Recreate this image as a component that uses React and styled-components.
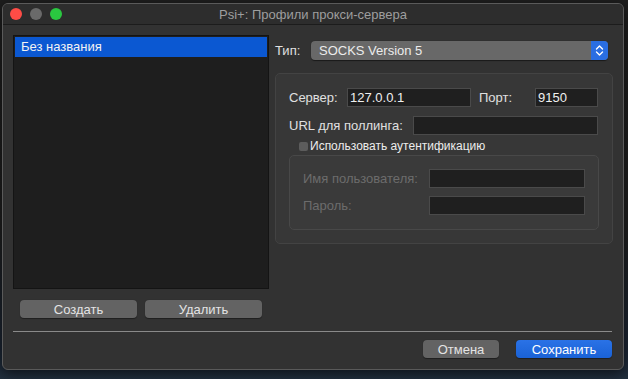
import styled, { createGlobalStyle } from "styled-components";

const GlobalStyle = createGlobalStyle`
  html, body {
    margin: 0;
    padding: 0;
  }
  body {
    width: 628px;
    height: 379px;
    overflow: hidden;
    background: linear-gradient(180deg, #1e1e1e 0%, #1f1f1f 60%, #1b2533 92%, #22303f 100%);
    font-family: "Liberation Sans", Arial, sans-serif;
    font-size: 13px;
    color: #dcdcdc;
  }
`;

const Window = styled.div`
  margin: 3px 0 0 2px;
  width: 620px;
  height: 365px;
  background: #323232;
  border: 1px solid #5a5a5a;
  border-radius: 6px;
  overflow: hidden;
  display: flex;
  flex-direction: column;
  box-shadow: 0 4px 14px rgba(0, 0, 0, 0.6);
`;

const TitleBar = styled.div`
  height: 20px;
  flex: none;
  position: relative;
  display: flex;
  align-items: center;
  justify-content: center;
  background: #2d2d2d;
  border-bottom: 1px solid #1c1c1c;
  color: #9e9e9e;
  font-size: 13px;
`;

const Lights = styled.div`
  position: absolute;
  left: 7px;
  top: 4px;
  display: flex;
  gap: 8px;
`;

const Light = styled.span`
  width: 12px;
  height: 12px;
  border-radius: 50%;
  background: ${(p) => p.$color};
`;

const Body = styled.div`
  display: grid;
  grid-template-columns: 256px 1fr;
  column-gap: 6px;
  padding: 10px 11px 0 10px;
`;

const LeftCol = styled.div`
  display: flex;
  flex-direction: column;
`;

const List = styled.div`
  height: 254px;
  background: #1e1e1e;
  border: 1px solid #141414;
  box-sizing: border-box;
  padding: 1px;
`;

const ListItem = styled.div`
  height: 20px;
  line-height: 20px;
  padding-left: 6px;
  background: ${(p) => (p.$selected ? "#0b58d2" : "transparent")};
  color: #f2f2f2;
`;

const ButtonRow = styled.div`
  display: flex;
  gap: 8px;
  padding: 0 7px;
  margin-top: 11px;
`;

const Button = styled.button`
  width: ${(p) => p.$w}px;
  height: 18px;
  padding: 0;
  border: none;
  border-radius: 4px;
  font-family: inherit;
  font-size: 13px;
  color: ${(p) => (p.$primary ? "#ffffff" : "#e4e4e4")};
  background: ${(p) =>
    p.$primary ? "linear-gradient(180deg, #2a72e6, #1a62d6)" : "#636363"};
  box-shadow: 0 0.5px 1px rgba(0, 0, 0, 0.4);
`;

const RightCol = styled.div`
  display: flex;
  flex-direction: column;
`;

const TypeRow = styled.div`
  display: flex;
  align-items: center;
  gap: 9px;
  margin-top: 6px;
  padding-right: 5px;
`;

const Label = styled.span`
  color: ${(p) => (p.$disabled ? "#6c6c6c" : "#e0e0e0")};
  white-space: nowrap;
  width: ${(p) => (p.$w ? `${p.$w}px` : "auto")};
  flex: none;
`;

const Select = styled.div`
  flex: 1;
  height: 19px;
  display: flex;
  border-radius: 4px;
  overflow: hidden;
  background: #686868;
  box-shadow: 0 0.5px 1px rgba(0, 0, 0, 0.5);
`;

const SelectText = styled.span`
  flex: 1;
  padding-left: 8px;
  line-height: 19px;
  color: #ececec;
  font-size: 13px;
`;

const SelectArrow = styled.span`
  width: 17px;
  display: flex;
  align-items: center;
  justify-content: center;
  background: #2a6ee2;
`;

const Group = styled.div`
  margin-top: 13px;
  background: #373737;
  border: 1px solid #434343;
  border-radius: 5px;
  padding: ${(p) => p.$pad};
  display: flex;
  flex-direction: column;
`;

const Row = styled.div`
  display: flex;
  align-items: center;
  height: 19px;
  margin-top: ${(p) => p.$mt || 0}px;
`;

const Input = styled.div`
  width: ${(p) => p.$w}px;
  height: 19px;
  box-sizing: border-box;
  background: #1f1f1f;
  border: 1px solid #4a4a4a;
  padding-left: 2px;
  line-height: 17px;
  color: #f0f0f0;
  font-size: 13px;
`;

const CheckRow = styled.div`
  display: flex;
  align-items: center;
  gap: 2px;
  margin: 5px 0 0 10px;
  height: 12px;
  color: #ececec;
  font-size: 12px;
`;

const Box = styled.span`
  width: 9px;
  height: 9px;
  border-radius: 2px;
  background: #5c5c5c;
`;

const InnerGroup = styled(Group)`
  margin-top: 3px;
  width: 310px;
  box-sizing: border-box;
  background: #3a3a3a;
  border-color: #484848;
`;

const Separator = styled.div`
  height: 1px;
  flex: none;
  background: #8a8a8a;
  margin: 13px 11px 0 10px;
`;

const Footer = styled.div`
  display: flex;
  justify-content: flex-end;
  gap: 17px;
  padding: 8px 11px 0 0;
`;

const Chevrons = () => (
  <svg width="9" height="13" viewBox="0 0 9 13">
    <path
      d="M1.5 5 L4.5 2 L7.5 5 M1.5 8 L4.5 11 L7.5 8"
      fill="none"
      stroke="#ffffff"
      strokeWidth="1.4"
      strokeLinecap="round"
      strokeLinejoin="round"
    />
  </svg>
);

export default function App() {
  return (
    <>
      <GlobalStyle />
      <Window>
        <TitleBar>
          <Lights>
            <Light $color="#fe4c46" />
            <Light $color="#6a6a6a" />
            <Light $color="#2ac840" />
          </Lights>
          Psi+: Профили прокси-сервера
        </TitleBar>
        <Body>
          <LeftCol>
            <List>
              <ListItem $selected>Без названия</ListItem>
            </List>
            <ButtonRow>
              <Button $w={117}>Создать</Button>
              <Button $w={117}>Удалить</Button>
            </ButtonRow>
          </LeftCol>
          <RightCol>
            <TypeRow>
              <Label $w={27}>Тип:</Label>
              <Select>
                <SelectText>SOCKS Version 5</SelectText>
                <SelectArrow>
                  <Chevrons />
                </SelectArrow>
              </Select>
            </TypeRow>
            <Group $pad="14px 13px 13px 13px">
              <Row>
                <Label $w={58}>Сервер:</Label>
                <Input $w={124}>127.0.0.1</Input>
                <Label $w={56} style={{ paddingLeft: 8 }}>
                  Порт:
                </Label>
                <Input $w={63}>9150</Input>
              </Row>
              <Row $mt={9}>
                <Label $w={124}>URL для поллинга:</Label>
                <Input $w={185} />
              </Row>
              <CheckRow>
                <Box />
                Использовать аутентификацию
              </CheckRow>
              <InnerGroup $pad="13px 13px 14px 13px">
                <Row>
                  <Label $disabled $w={126}>
                    Имя пользователя:
                  </Label>
                  <Input $w={156} />
                </Row>
                <Row $mt={8}>
                  <Label $disabled $w={126}>
                    Пароль:
                  </Label>
                  <Input $w={156} />
                </Row>
              </InnerGroup>
            </Group>
          </RightCol>
        </Body>
        <Separator />
        <Footer>
          <Button $w={76}>Отмена</Button>
          <Button $w={96} $primary>
            Сохранить
          </Button>
        </Footer>
      </Window>
    </>
  );
}
